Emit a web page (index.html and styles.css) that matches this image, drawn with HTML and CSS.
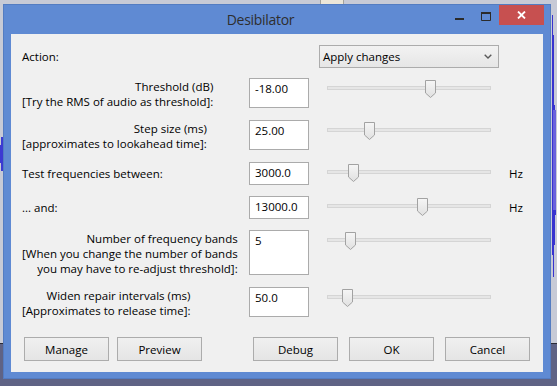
FILE: index.html
```html
<!DOCTYPE html>
<html>
<head>
<meta charset="utf-8">
<title>Desibilator</title>
<link rel="stylesheet" href="styles.css">
</head>
<body>
<div class="desk-tab"></div>
<svg class="wave wave-right" width="6" height="262" viewBox="0 0 6 262">
  <path d="M1 0 H2 V20 H3 V90 H4 V100 H5 V200 H4 V230 H3 V262 H2 V240 H1 Z" fill="#3833cf"/>
  <rect x="2" y="95" width="3" height="100" fill="#6a62dc"/>
</svg>
<svg class="wave wave-left" width="3" height="34" viewBox="0 0 3 34">
  <path d="M1 0 H3 V34 H1 V26 H0 V8 H1 Z" fill="#3c3ad2"/>
</svg>

<div class="window">
  <div class="titlebar">
    <span class="title">Desibilator</span>
    <div class="caption">
      <span class="cap cap-min"><svg width="9" height="2" viewBox="0 0 9 2"><rect width="9" height="2" fill="#2b2b2b"/></svg></span>
      <span class="cap cap-max"><svg width="10" height="9" viewBox="0 0 10 9"><path d="M0.5 1 H9.5 V8.5 H0.5 Z" fill="none" stroke="#2b2b2b" stroke-width="1"/><rect x="0" y="0" width="10" height="2" fill="#2b2b2b"/></svg></span>
      <span class="cap cap-close"><svg width="9" height="8" viewBox="0 0 9 8"><path d="M1 0.5 L8 7.5 M8 0.5 L1 7.5" stroke="#fff" stroke-width="1.8"/></svg></span>
    </div>
  </div>

  <div class="content">
    <div class="action-row">
      <span class="lbl-one">Action:</span>
      <div class="select">
        <span>Apply changes</span>
        <svg width="8" height="5" viewBox="0 0 8 5"><path d="M0.7 0.7 L4 4 L7.3 0.7" fill="none" stroke="#5a5a5a" stroke-width="1.4"/></svg>
      </div>
    </div>

    <div class="form">
      <span class="lbl">Threshold (dB)<br>[Try the RMS of audio as threshold]:</span>
      <div class="field h30">-18.00</div>
      <div class="slider"><div class="track"></div><svg class="thumb" style="left:98px" width="11" height="18" viewBox="0 0 11 18"><use href="#thumb"/></svg></div>

      <span class="lbl">Step size (ms)<br>[approximates to lookahead time]:</span>
      <div class="field h30">25.00</div>
      <div class="slider"><div class="track"></div><svg class="thumb" style="left:37px" width="11" height="18" viewBox="0 0 11 18"><use href="#thumb"/></svg></div>

      <span class="lbl-one">Test frequencies between:</span>
      <div class="field h23">3000.0</div>
      <div class="slider"><div class="track"></div><svg class="thumb" style="left:21px" width="11" height="18" viewBox="0 0 11 18"><use href="#thumb"/></svg></div>
      <span class="hz">Hz</span>

      <span class="lbl-one">... and:</span>
      <div class="field h23">13000.0</div>
      <div class="slider"><div class="track"></div><svg class="thumb" style="left:90px" width="11" height="18" viewBox="0 0 11 18"><use href="#thumb"/></svg></div>
      <span class="hz">Hz</span>

      <span class="lbl">Number of frequency bands<br>[When you change the number of bands<br>you may have to re-adjust threshold]:</span>
      <div class="field h45">5</div>
      <div class="slider"><div class="track"></div><svg class="thumb" style="left:18px" width="11" height="18" viewBox="0 0 11 18"><use href="#thumb"/></svg></div>

      <span class="lbl">Widen repair intervals (ms)<br>[Approximates to release time]:</span>
      <div class="field h30">50.0</div>
      <div class="slider"><div class="track"></div><svg class="thumb" style="left:15px" width="11" height="18" viewBox="0 0 11 18"><use href="#thumb"/></svg></div>
    </div>

    <div class="buttons">
      <div class="btn-group left">
        <button class="btn">Manage</button>
        <button class="btn">Preview</button>
      </div>
      <div class="btn-group right">
        <button class="btn">Debug</button>
        <button class="btn">OK</button>
        <button class="btn">Cancel</button>
      </div>
    </div>
  </div>
</div>

<svg class="defs" width="0" height="0">
  <defs>
    <linearGradient id="thumbgrad" x1="0" y1="0" x2="0" y2="1">
      <stop offset="0" stop-color="#f6f6f6"/>
      <stop offset="1" stop-color="#e0e0e0"/>
    </linearGradient>
    <symbol id="thumb" viewBox="0 0 11 18">
      <path d="M0.5 0.5 H10.5 V13 L5.5 17.5 L0.5 13 Z" fill="url(#thumbgrad)" stroke="#a2a2a2" stroke-width="1"/>
    </symbol>
  </defs>
</svg>
</body>
</html>
```

FILE: styles.css
```css
html, body {
  margin: 0;
  padding: 0;
}
body {
  width: 557px;
  height: 386px;
  position: relative;
  overflow: hidden;
  background: linear-gradient(to bottom, #c7cad6 0, #c7cad6 343px, #2a2b36 343px, #2a2b36 344px, #5f6385 344px);
  font-family: "Open Sans", "Noto Sans", sans-serif;
  font-size: 11.5px;
  color: #000;
}
.defs {
  position: absolute;
}
.desk-tab {
  position: absolute;
  left: 320px;
  top: 0;
  width: 22px;
  height: 4px;
  background: #ece6d8;
  border-left: 1px solid #a4a29b;
  border-right: 1px solid #a4a29b;
}
.wave {
  position: absolute;
}
.wave-right {
  left: 551px;
  top: 15px;
}
.wave-left {
  left: 0;
  top: 137px;
}

.window {
  position: absolute;
  left: 3px;
  top: 4px;
  width: 548px;
  height: 375px;
  box-sizing: border-box;
  background: #5f8ad3;
  border: 1px solid #537cc2;
  display: flex;
  flex-direction: column;
}
.titlebar {
  height: 29px;
  display: flex;
  align-items: center;
}
.title {
  flex: 1;
  text-align: center;
  padding-left: 71px;
  font-size: 14px;
  letter-spacing: -0.3px;
  color: #2e2e2e;
}
.caption {
  align-self: flex-start;
  display: flex;
  margin-right: 6px;
  height: 20px;
}
.cap {
  display: flex;
  align-items: center;
  justify-content: center;
  height: 20px;
}
.cap svg {
  display: block;
}
.cap-min {
  width: 26px;
  align-items: flex-start;
}
.cap-min svg {
  margin-top: 13px;
}
.cap-max {
  width: 27px;
  align-items: flex-start;
}
.cap-max svg {
  margin-top: 7px;
}
.cap-close {
  width: 45px;
  background: #c75050;
}

.content {
  flex: 1;
  margin: 0 7px 6px 7px;
  background: #f0f0f0;
  padding: 11px 13px 11px 11px;
  display: flex;
  flex-direction: column;
}

.action-row {
  display: grid;
  grid-template-columns: 297px 180px;
  align-items: center;
  height: 23px;
}
.action-row .lbl-one {
  margin-top: -1px;
}
.select {
  height: 23px;
  box-sizing: border-box;
  border: 1px solid #acacac;
  background: linear-gradient(to bottom, #f2f2f2, #e6e6e6);
  display: flex;
  align-items: center;
  justify-content: space-between;
  padding: 0 6px 0 3px;
}
.select svg {
  display: block;
}

.form {
  margin-top: 10px;
  display: grid;
  grid-template-columns: 227px 78px 182px auto;
  row-gap: 11px;
}
.lbl, .lbl-one {
  grid-column: 1;
  justify-self: start;
  line-height: 15px;
  white-space: nowrap;
}
.lbl {
  align-self: start;
  text-align: right;
  padding-top: 1px;
}
.lbl-one {
  align-self: center;
}
.field {
  grid-column: 2;
  width: 60px;
  box-sizing: border-box;
  border: 1px solid #ababab;
  background: #fff;
  padding: 2px 5px 0 5px;
  line-height: 15px;
}
.h30 { height: 30px; }
.h23 { height: 23px; }
.h45 { height: 45px; }

.slider {
  grid-column: 3;
  align-self: start;
  position: relative;
  width: 164px;
  height: 20px;
}
.track {
  margin-top: 8px;
  height: 4px;
  box-sizing: border-box;
  border: 1px solid #d5d5d5;
  background: #e6e6e6;
}
.thumb {
  position: absolute;
  top: 2px;
  display: block;
}
.hz {
  grid-column: 4;
  align-self: center;
  line-height: 15px;
}

.buttons {
  margin-top: auto;
  display: flex;
  justify-content: space-between;
  padding-left: 2px;
}
.btn-group {
  display: flex;
}
.btn-group.left {
  gap: 8px;
}
.btn-group.right {
  gap: 11px;
}
.btn {
  width: 85px;
  height: 24px;
  box-sizing: border-box;
  border: 1px solid #acacac;
  background: linear-gradient(to bottom, #f0f0f0, #e5e5e5);
  font-family: inherit;
  font-size: 11.5px;
  color: #000;
  padding: 0;
  margin: 0;
  border-radius: 0;
}
```
